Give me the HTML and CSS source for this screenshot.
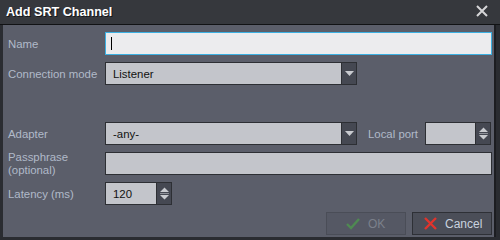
FILE: index.html
```html
<!DOCTYPE html>
<html>
<head>
<meta charset="utf-8">
<link rel="stylesheet" href="styles.css">
</head>
<body>
<div class="window">
  <div class="titlebar">
    <span class="title">Add SRT Channel</span>
    <svg class="close" width="12" height="12" viewBox="0 0 12 12"><path d="M1 1 L11 11 M11 1 L1 11" stroke="#d6d6d8" stroke-width="2" fill="none"/></svg>
  </div>
  <div class="content">
    <div class="form">
      <label class="lbl">Name</label>
      <div class="field input focus"><span class="caret"></span></div>

      <label class="lbl">Connection mode</label>
      <div class="row">
        <div class="field select w252"><span class="val">Listener</span><span class="drop"><svg width="9" height="5" viewBox="0 0 9 5"><path d="M0 0 H9 L4.5 5 Z" fill="#c9cbd0"/></svg></span></div>
      </div>

      <div class="spacer"></div>

      <label class="lbl">Adapter</label>
      <div class="row">
        <div class="field select w252"><span class="val">-any-</span><span class="drop"><svg width="9" height="5" viewBox="0 0 9 5"><path d="M0 0 H9 L4.5 5 Z" fill="#c9cbd0"/></svg></span></div>
        <label class="lbl inline">Local port</label>
        <div class="field select w66"><span class="val"></span><span class="drop spin"><svg width="9" height="15" viewBox="0 0 9 15"><path d="M0 6 H9 L4.5 1.5 Z M0 9 H9 L4.5 13.5 Z" fill="#c9cbd0"/><path d="M0 7.5 H9" stroke="#8e9199" stroke-width="1"/></svg></span></div>
      </div>

      <label class="lbl two">Passphrase<br>(optional)</label>
      <div class="field input"></div>

      <label class="lbl">Latency (ms)</label>
      <div class="row">
        <div class="field select w67"><span class="val">120</span><span class="drop spin"><svg width="9" height="15" viewBox="0 0 9 15"><path d="M0 6 H9 L4.5 1.5 Z M0 9 H9 L4.5 13.5 Z" fill="#c9cbd0"/><path d="M0 7.5 H9" stroke="#8e9199" stroke-width="1"/></svg></span></div>
      </div>
    </div>
    <div class="buttons">
      <button class="btn disabled"><svg width="14" height="12" viewBox="0 0 14 12"><path d="M1 6 L5 10 L13 1" stroke="#4f8a52" stroke-width="2.4" fill="none"/></svg><span>OK</span></button>
      <button class="btn"><svg width="13" height="13" viewBox="0 0 13 13"><path d="M1 1 L12 12 M12 1 L1 12" stroke="#e0342c" stroke-width="2.4" fill="none"/></svg><span>Cancel</span></button>
    </div>
  </div>
</div>
</body>
</html>
```
FILE: styles.css
```css
* { box-sizing: border-box; }
html, body { margin: 0; padding: 0; }
body {
  width: 500px;
  height: 240px;
  background: #26282d;
  font-family: "Liberation Sans", Arial, sans-serif;
  font-size: 11.4px;
  overflow: hidden;
}
.window {
  width: 500px;
  height: 240px;
  display: flex;
  flex-direction: column;
  background: #2a2c31;
}
.titlebar {
  height: 25px;
  background: #36383d;
  border-bottom: 1px solid #111214;
  display: flex;
  align-items: center;
  justify-content: space-between;
  padding: 0 12px 1px 6px;
}
.title {
  color: #ffffff;
  font-family: "Liberation Sans", Arial, sans-serif;
  font-weight: bold;
  font-size: 12.6px;
  text-shadow: 1px 1px 0 #15161a;
}
.close { display: block; margin-top: -1px; }
.content {
  margin-left: 3px;
  width: 493px;
  height: 212px;
  background: #5b5e6a;
  border-right: 2px solid #1c1d21;
  padding: 7px 2px 0 5px;
  display: flex;
  flex-direction: column;
  gap: 7px;
}
.form {
  display: grid;
  grid-template-columns: 97px 1fr;
  grid-auto-rows: 23px;
  row-gap: 7px;
}
.spacer { grid-column: 1 / 3; }
.lbl {
  color: #b1bac9;
  display: flex;
  align-items: center;
  white-space: nowrap;
}
.lbl.two {
  display: block;
  line-height: 13px;
  margin-top: -1px;
}
.lbl.inline { margin: 0 11px 0 11px; width: 46px; }
.row { display: flex; align-items: stretch; }
.field {
  height: 23px;
  border: 1px solid #2d2f34;
  background: #c3c5cb;
  color: #111;
  display: flex;
  align-items: center;
}
.input { width: 387px; }
.input.focus {
  background: #ececee;
  border-color: #3cb0e2;
  padding-left: 5px;
}
.caret {
  width: 1px;
  height: 13px;
  background: #000;
}
.select { padding-left: 7px; justify-content: space-between; }
.w252 { width: 252px; }
.w66 { width: 66px; }
.w67 { width: 67px; }
.val { flex: 1; }
.drop {
  width: 15px;
  height: 100%;
  background: #454852;
  border-left: 1px solid #2d2f34;
  display: flex;
  align-items: center;
  justify-content: center;
}
.drop svg { display: block; }
.buttons {
  display: flex;
  justify-content: flex-end;
  gap: 6px;
}
.btn {
  width: 80px;
  height: 23px;
  background: #4b4e58;
  border: 1px solid #2e3036;
  font-family: "Liberation Sans", Arial, sans-serif;
  font-size: 12px;
  color: #c9d2df;
  display: flex;
  align-items: center;
  padding: 0 0 0 11px;
  gap: 8px;
}
.btn svg { display: block; }
.btn.disabled { color: #7b808b; background: #555864; border-color: #4a4d57; padding-left: 19px; }
```
